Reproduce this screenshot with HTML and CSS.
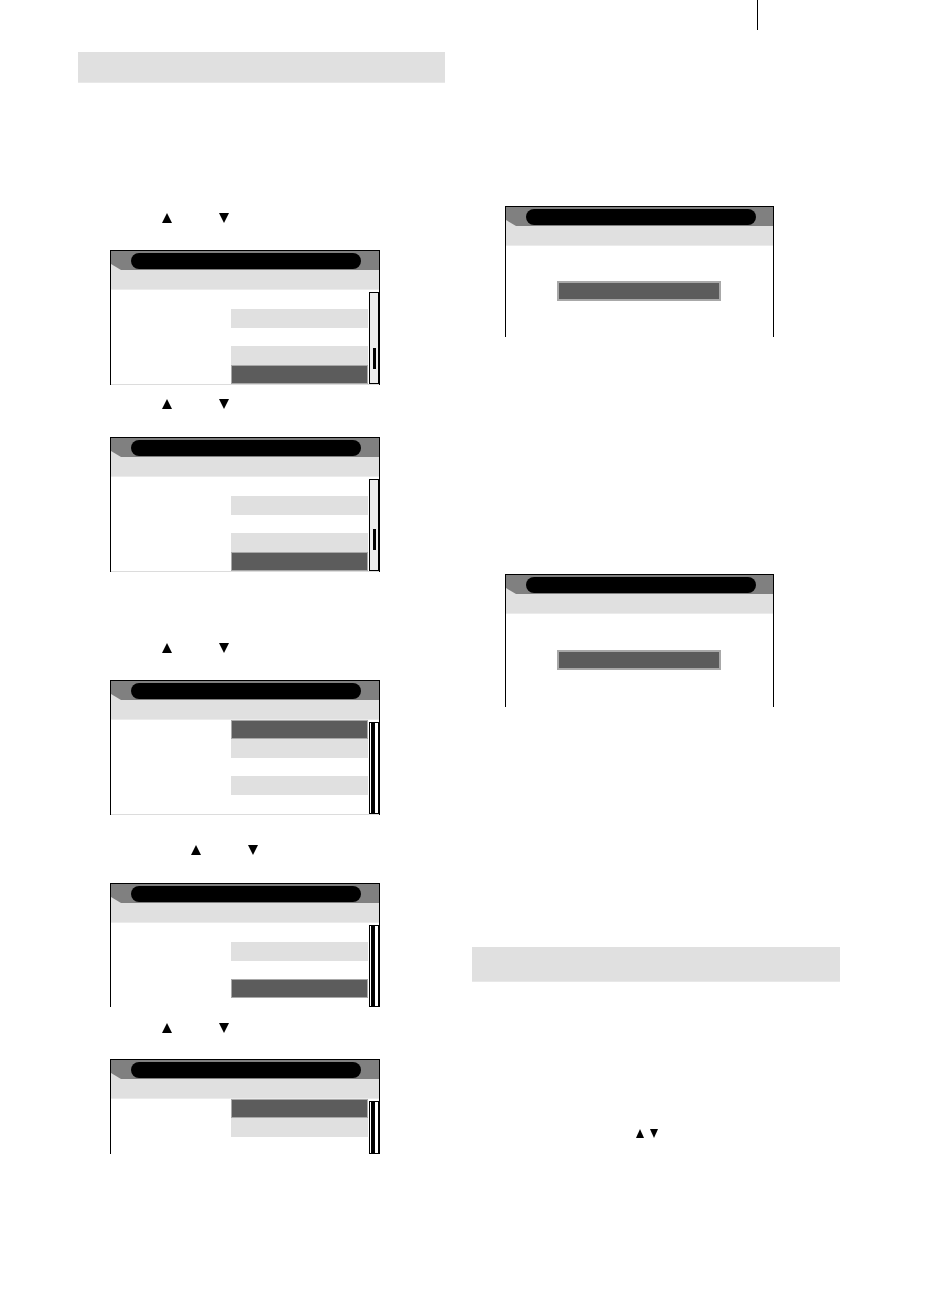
FILE: index.html
```html
<!DOCTYPE html>
<html lang="en">
<head>
<meta charset="utf-8">
<title>Menu screens</title>
<link rel="stylesheet" href="styles.css">
</head>
<body>
<div class="page">
  <div class="col col-left">
    <div class="section-bar bar-left"></div>

    <div class="arrows a1"><span class="tri up"></span><span class="tri down"></span></div>
    <div class="screen s1">
      <div class="screen-head"><div class="screen-title"><div class="pill"></div></div><div class="screen-band"></div></div>
      <div class="list closed">
        <div class="rows">
          <div class="row"><span class="label"></span><span class="field"></span></div>
          <div class="row"><span class="label"></span><span class="field input"></span></div>
          <div class="row"><span class="label"></span><span class="field"></span></div>
          <div class="row"><span class="label"></span><span class="field input"></span></div>
          <div class="row"><span class="label"></span><span class="field sel"></span></div>
        </div>
        <div class="scroll"><div class="thumb t1"></div></div>
      </div>
    </div>

    <div class="arrows a2"><span class="tri up"></span><span class="tri down"></span></div>
    <div class="screen s2">
      <div class="screen-head"><div class="screen-title"><div class="pill"></div></div><div class="screen-band"></div></div>
      <div class="list closed">
        <div class="rows">
          <div class="row"><span class="label"></span><span class="field"></span></div>
          <div class="row"><span class="label"></span><span class="field input"></span></div>
          <div class="row"><span class="label"></span><span class="field"></span></div>
          <div class="row"><span class="label"></span><span class="field input"></span></div>
          <div class="row"><span class="label"></span><span class="field sel"></span></div>
        </div>
        <div class="scroll"><div class="thumb t2"></div></div>
      </div>
    </div>

    <div class="arrows a3"><span class="tri up"></span><span class="tri down"></span></div>
    <div class="screen s3">
      <div class="screen-head"><div class="screen-title"><div class="pill"></div></div><div class="screen-band"></div></div>
      <div class="list closed">
        <div class="rows">
          <div class="row"><span class="label"></span><span class="field sel"></span></div>
          <div class="row"><span class="label"></span><span class="field input"></span></div>
          <div class="row"><span class="label"></span><span class="field"></span></div>
          <div class="row"><span class="label"></span><span class="field input"></span></div>
          <div class="row"><span class="label"></span><span class="field"></span></div>
        </div>
        <div class="scroll full"><div class="thumb"></div></div>
      </div>
    </div>

    <div class="arrows a4"><span class="tri up"></span><span class="tri down"></span></div>
    <div class="screen s4">
      <div class="screen-head"><div class="screen-title"><div class="pill"></div></div><div class="screen-band"></div></div>
      <div class="list cut cut4">
        <div class="rows">
          <div class="row"><span class="label"></span><span class="field"></span></div>
          <div class="row"><span class="label"></span><span class="field input"></span></div>
          <div class="row"><span class="label"></span><span class="field"></span></div>
          <div class="row"><span class="label"></span><span class="field sel"></span></div>
          <div class="row"><span class="label"></span><span class="field"></span></div>
        </div>
        <div class="scroll full"><div class="thumb"></div></div>
      </div>
    </div>

    <div class="arrows a5"><span class="tri up"></span><span class="tri down"></span></div>
    <div class="screen s5">
      <div class="screen-head"><div class="screen-title"><div class="pill"></div></div><div class="screen-band"></div></div>
      <div class="list cut cut5">
        <div class="rows">
          <div class="row"><span class="label"></span><span class="field sel"></span></div>
          <div class="row"><span class="label"></span><span class="field input"></span></div>
          <div class="row"><span class="label"></span><span class="field"></span></div>
        </div>
        <div class="scroll full"><div class="thumb"></div></div>
      </div>
    </div>
  </div>

  <div class="col col-right">
    <div class="edge-mark"></div>

    <div class="screen dialog da">
      <div class="screen-head"><div class="screen-title"><div class="pill"></div></div><div class="screen-band"></div></div>
      <div class="dialog-body body-a"><div class="dialog-box"></div></div>
    </div>

    <div class="screen dialog db">
      <div class="screen-head"><div class="screen-title"><div class="pill"></div></div><div class="screen-band"></div></div>
      <div class="dialog-body body-b"><div class="dialog-box"></div></div>
    </div>

    <div class="section-bar bar-right"></div>

    <div class="arrows a6"><span class="tri up small"></span><span class="tri down small"></span></div>
  </div>
</div>
</body>
</html>
```

FILE: styles.css
```css
html, body {
  margin: 0;
  padding: 0;
  background: #ffffff;
  font-family: "Liberation Sans", Arial, sans-serif;
}

.page {
  display: flex;
  width: 933px;
  height: 1316px;
  overflow: hidden;
}

.col {
  display: flex;
  flex-direction: column;
  align-items: flex-start;
}

.col-left {
  margin-left: 78px;
  width: 367px;
}

.col-right {
  margin-left: 27px;
  width: 368px;
}

/* grey section header bars */
.section-bar {
  background: #e0e0e0;
  border-bottom: 1px solid #e8e8e8;
  box-sizing: border-box;
}

.bar-left {
  margin-top: 52px;
  width: 367px;
  height: 31px;
}

.bar-right {
  margin-top: 240px;
  width: 368px;
  height: 35px;
}

/* arrow glyph lines */
.arrows {
  display: flex;
  align-items: flex-start;
  height: 10px;
  gap: 47px;
}

.tri {
  display: block;
  width: 0;
  height: 0;
  border-left: 5px solid transparent;
  border-right: 5px solid transparent;
}

.tri.up { border-bottom: 10px solid #000; }
.tri.down { border-top: 10px solid #000; }

.tri.small {
  border-left-width: 4px;
  border-right-width: 4px;
}
.tri.up.small { border-bottom-width: 9px; }
.tri.down.small { border-top-width: 9px; }

.a1 { margin-top: 130px; margin-left: 84px; }
.a2 { margin-top: 14px; margin-left: 84px; }
.a3 { margin-top: 71px; margin-left: 84px; }
.a4 { margin-top: 30px; margin-left: 113px; }
.a5 { margin-top: 16px; margin-left: 84px; }
.a6 { margin-top: 147px; margin-left: 164px; gap: 6px; height: 9px; }

/* device screen */
.screen {
  width: 270px;
  box-sizing: border-box;
  border: 1px solid #000;
  border-bottom: none;
  margin-left: 32px;
  background: #fff;
}

.s1 { margin-top: 27px; }
.s2 { margin-top: 28px; }
.s3 { margin-top: 27px; }
.s4 { margin-top: 28px; }
.s5 { margin-top: 26px; }

.screen-head {
  background: #e0e0e0;
}

.screen-title {
  height: 19px;
  background: #808080;
  clip-path: polygon(0 0, 100% 0, 100% 100%, 10px 100%, 0 calc(100% - 6px));
  display: flex;
  align-items: flex-start;
}

.pill {
  margin-top: 2px;
  margin-left: 20px;
  width: 230px;
  height: 16px;
  border-radius: 8px;
  background: #000;
}

.screen-band {
  height: 20px;
  background: #e0e0e0;
  border-bottom: 1px solid #ebebeb;
  box-sizing: border-box;
}

/* list body */
.list {
  display: flex;
  align-items: stretch;
}

.list.closed {
  border-bottom: 1px solid #dcdcdc;
}

.list.cut { overflow: hidden; }
.cut4 { height: 84px; }
.cut5 { height: 55px; }

.rows {
  width: 258px;
  display: flex;
  flex-direction: column;
}

.row {
  display: grid;
  grid-template-columns: 120px 137px;
  height: 18.8px;
  flex: none;
}

.field {
  display: block;
  box-sizing: border-box;
}

.field.input {
  background: #e0e0e0;
}

.field.sel {
  background: #5c5c5c;
  border: 1px solid #a8a8a8;
}

.scroll {
  width: 10px;
  box-sizing: border-box;
  margin-top: 2px;
  border: 1px solid #000;
  background: #ececec;
  display: flex;
  flex-direction: column;
  align-items: flex-start;
}

.scroll .thumb {
  width: 3px;
  margin-left: 3px;
  background: #000;
  height: 21px;
}

.thumb.t1 { margin-top: 55px; }
.thumb.t2 { margin-top: 49px; }

.scroll.full {
  background: #fff;
}

.scroll.full .thumb {
  width: 4px;
  margin-left: 1px;
  height: 100%;
}

/* right-hand dialog screens */
.edge-mark {
  width: 1px;
  height: 30px;
  background: #000;
  margin-left: 285px;
}

.screen.dialog {
  width: 269px;
  margin-left: 33px;
}

.da { margin-top: 176px; }
.db { margin-top: 237px; }

.dialog-body {
  display: flex;
  flex-direction: column;
  align-items: flex-start;
}

.body-a { height: 91px; }
.body-a .dialog-box { margin-top: 35px; }
.body-b { height: 93px; }
.body-b .dialog-box { margin-top: 36px; }

.dialog-box {
  margin-left: 51px;
  width: 164px;
  height: 20px;
  box-sizing: border-box;
  background: #5c5c5c;
  border: 2px solid #a8a8a8;
}
```
